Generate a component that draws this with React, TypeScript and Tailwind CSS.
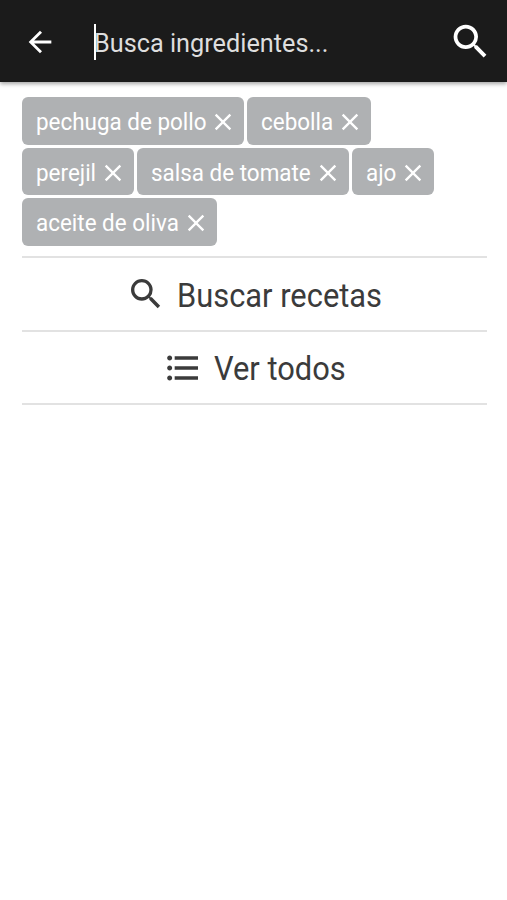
import React from 'react';
import { MdArrowBack, MdClose, MdFormatListBulleted, MdSearch } from 'react-icons/md';

const rows = [
  [
    { name: 'pechuga de pollo', chip: 'w-[222px]', label: 'w-[171px]' },
    { name: 'cebolla', chip: 'w-[124px]', label: 'w-[73px]' },
  ],
  [
    { name: 'perejil', chip: 'w-[112px]', label: 'w-[61px]' },
    { name: 'salsa de tomate', chip: 'w-[212px]', label: 'w-[161px]' },
    { name: 'ajo', chip: 'w-[82px]', label: 'w-[31px]' },
  ],
  [{ name: 'aceite de oliva', chip: 'w-[195px]', label: 'w-[144px]' }],
];

const App = () => {
  return (
    <div className="min-h-screen bg-white font-[Roboto,sans-serif]">
      {/* Search bar */}
      <header className="flex h-[82px] items-center bg-[#1b1b1b] pl-[23px] pr-[14px] text-white shadow-[0_2px_4px_rgba(0,0,0,0.35)]">
        <MdArrowBack size={34} className="mt-px" />
        <div className="ml-[37px] flex flex-1 items-center">
          <span className="mt-px h-[36px] w-[2px] bg-white" />
          <span className="-ml-[2px] mt-[5px] origin-left scale-x-[0.972] whitespace-nowrap text-[26px] text-[#dedede]">
            Busca ingredientes...
          </span>
        </div>
        <MdSearch size={45} />
      </header>

      <main className="pl-[22px] pr-[20px] pt-[15px]">
        {/* Selected ingredients */}
        <div className="flex flex-col gap-[3px]">
          {rows.map((row, i) => (
            <div key={i} className="flex gap-[3px]">
              {row.map((item) => (
                <button
                  key={item.name}
                  className={`flex h-[47.5px] items-center rounded-[6px] bg-[#afb1b3] pl-[14px] pt-[3px] text-white ${item.chip}`}
                >
                  <span className={`shrink-0 text-left text-[24px] ${item.label}`}>
                    <span className="inline-block origin-left scale-x-[0.935] whitespace-nowrap">{item.name}</span>
                  </span>
                  <MdClose size={28} className="ml-[2px] shrink-0" />
                </button>
              ))}
            </div>
          ))}
        </div>

        {/* Actions */}
        <div className="mt-[10px] border-t-2 border-[#e2e2e2] text-[33px] text-[#3b3b3b]">
          <button className="flex h-[74px] w-full items-center justify-center border-b-2 border-[#e2e2e2]">
            <MdSearch size={40} />
            <span className="ml-[11px] mt-[4px] w-[207px] text-left">
              <span className="inline-block origin-left scale-x-[0.935] whitespace-nowrap">Buscar recetas</span>
            </span>
          </button>
          <button className="flex h-[73px] w-full items-center justify-center border-b-2 border-[#e2e2e2]">
            <MdFormatListBulleted size={40} className="mt-px" />
            <span className="ml-[11px] mt-[4px] w-[133px] text-left">
              <span className="inline-block origin-left scale-x-[0.935] whitespace-nowrap">Ver todos</span>
            </span>
          </button>
        </div>
      </main>
    </div>
  );
};

export default App;
